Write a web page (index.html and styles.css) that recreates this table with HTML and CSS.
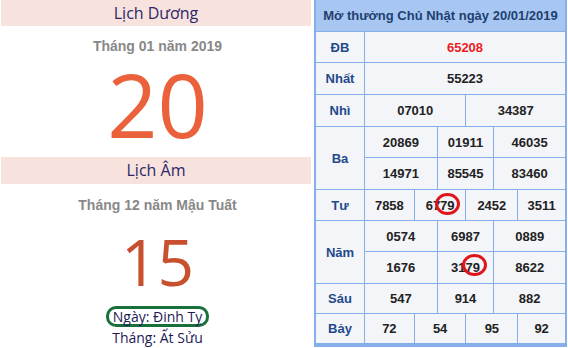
FILE: index.html
```html
<!DOCTYPE html>
<html lang="vi">
<head>
<meta charset="utf-8">
<title>Lịch và kết quả xổ số</title>
<link rel="stylesheet" href="styles.css">
</head>
<body>
<div class="page">
  <div class="cal">
    <div class="band">Lịch Dương</div>
    <div class="month m1">Tháng 01 năm 2019</div>
    <div class="day d1">20</div>
    <div class="band b2">Lịch Âm</div>
    <div class="month m2">Tháng 12 năm Mậu Tuất</div>
    <div class="day d2">15</div>
    <div class="canchi"><span class="ngay">Ngày: Đinh Tỵ</span></div>
    <div class="thang">Tháng: Ất Sửu</div>
  </div>
  <div class="kq">
    <div class="head">Mở thưởng Chủ Nhật ngày 20/01/2019</div>

    <div class="lab">ĐB</div>
    <div class="vals c1"><div class="num db">65208</div></div>

    <div class="lab">Nhất</div>
    <div class="vals c1"><div class="num">55223</div></div>

    <div class="lab">Nhì</div>
    <div class="vals c2"><div class="num">07010</div><div class="num">34387</div></div>

    <div class="lab">Ba</div>
    <div class="vals c3 two">
      <div class="num">20869</div><div class="num">01911</div><div class="num">46035</div>
      <div class="num">14971</div><div class="num">85545</div><div class="num">83460</div>
    </div>

    <div class="lab">Tư</div>
    <div class="vals c4">
      <div class="num">7858</div>
      <div class="num">6779<span class="ring r1"></span></div>
      <div class="num">2452</div>
      <div class="num">3511</div>
    </div>

    <div class="lab">Năm</div>
    <div class="vals c3 two">
      <div class="num">0574</div><div class="num">6987</div><div class="num">0889</div>
      <div class="num">1676</div><div class="num">3179<span class="ring r2"></span></div><div class="num">8622</div>
    </div>

    <div class="lab">Sáu</div>
    <div class="vals c3"><div class="num">547</div><div class="num">914</div><div class="num">882</div></div>

    <div class="lab">Bảy</div>
    <div class="vals c4"><div class="num">72</div><div class="num">54</div><div class="num">95</div><div class="num">92</div></div>
  </div>
</div>
</body>
</html>
```

FILE: styles.css
```css
html, body {
  margin: 0;
  padding: 0;
  background: #ffffff;
}

.page {
  display: flex;
  width: 568px;
  height: 348px;
  overflow: hidden;
}

.cal {
  width: 310px;
  margin-left: 1px;
  display: flex;
  flex-direction: column;
  align-items: stretch;
  text-align: center;
  font-family: "Open Sans", "Noto Sans", sans-serif;
}

.cal > :not(.band) {
  padding-left: 3px;
}

.band {
  height: 26px;
  line-height: 26px;
  background: #f8e2dd;
  color: #2a2868;
  font-size: 16px;
}

.b2 {
  height: 27px;
  line-height: 27px;
  margin-top: 17px;
}

.month {
  font-family: "Liberation Sans", Arial, sans-serif;
  font-weight: bold;
  font-size: 14px;
  line-height: 18px;
  color: #888888;
}

.m1 { margin-top: 11px; }
.m2 { margin-top: 12px; }

.day {
  font-weight: normal;
}

.d1 {
  font-size: 88px;
  line-height: 72px;
  height: 72px;
  margin-top: 13px;
  color: #ea613c;
}

.d2 {
  font-size: 64px;
  line-height: 50px;
  height: 50px;
  margin-top: 23px;
  color: #c9502f;
}

.canchi {
  margin-top: 19px;
  display: flex;
  justify-content: center;
}

.ngay {
  display: inline-block;
  border: 3px solid #19703a;
  border-radius: 10px;
  padding: 0 4px;
  height: 15px;
  line-height: 15px;
  font-size: 14px;
  color: #1d1b55;
}

.thang {
  margin-top: 2px;
  font-size: 14px;
  line-height: 18px;
  color: #1d1b55;
}

/* results table */
.kq {
  margin-left: 3px;
  width: 253px;
  height: 347px;
  box-sizing: border-box;
  padding: 0 2px 2px 2px;
  background: #86afe9;
  display: grid;
  grid-template-columns: 48px 1fr;
  grid-template-rows: 31px 30px 31px 31px 62px 30px 62px 29px 29px;
  gap: 1px;
  font-family: "Liberation Sans", Arial, sans-serif;
  font-weight: bold;
  font-size: 13px;
}

.head {
  grid-column: 1 / 3;
  background: #a7c6f1;
  color: #1f3f70;
  font-size: 13px;
  display: flex;
  align-items: center;
  justify-content: center;
}

.lab {
  background: #f3f5f9;
  color: #1f4a8c;
  display: flex;
  align-items: center;
  justify-content: center;
}

.vals {
  display: grid;
  gap: 1px;
}

.c1 { grid-template-columns: 1fr; }
.c2 { grid-template-columns: 101fr 99fr; }
.c3 { grid-template-columns: 72fr 56fr 71fr; }
.c4 { grid-template-columns: 49fr 51fr 51fr 47fr; }
.two { grid-template-rows: 30px 31px; }

.num {
  position: relative;
  background: #f3f5f9;
  color: #222222;
  display: flex;
  align-items: center;
  justify-content: center;
}

.db { color: #ec1c1c; }

.ring {
  position: absolute;
  width: 19px;
  height: 16px;
  border: 3px solid #e0141a;
  border-radius: 50%;
}

.r1 { left: 20px; top: 3px; }
.r2 { left: 24px; top: 2px; }
```
